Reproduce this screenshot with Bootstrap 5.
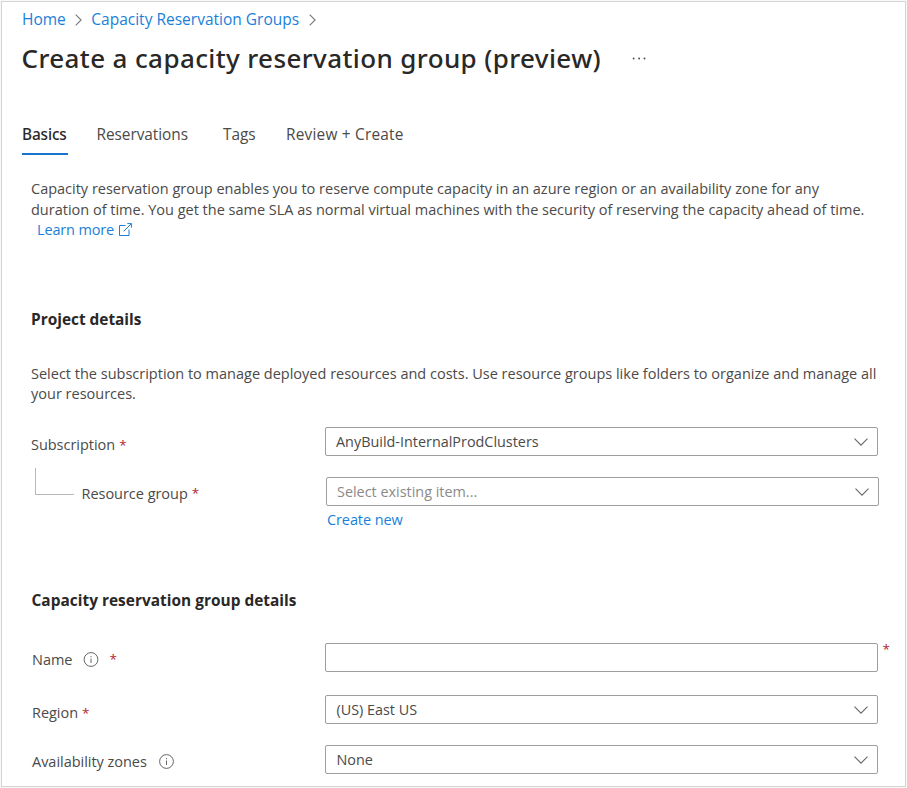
<!DOCTYPE html>
<html lang="en">
<head>
<meta charset="utf-8">
<meta name="viewport" content="width=device-width, initial-scale=1">
<title>Create a capacity reservation group (preview)</title>
<link rel="stylesheet" href="https://cdn.jsdelivr.net/npm/bootstrap@5.3.0/dist/css/bootstrap.min.css">
<style>
  body { background: #f8f8f8; padding: 1px; font-family: "Open Sans", "Noto Sans", sans-serif; font-size: 14.5px; line-height: 20.5px; color: #4b4a49; }
  a { color: #1a7fd9; text-decoration: none; }
  .blade { width: 905px; height: 786px; border-color: #d4d4d4 !important; padding: 7px 20px 0; }
  .crumbs { font-size: 15.5px; line-height: 20px; height: 20px; margin: 0; }
  .crumbs svg { margin: 1px 9px 0 9.5px; }
  .blade-title { font: 500 26px/36px "Noto Sans", "Open Sans", sans-serif; letter-spacing: .38px; color: #292827; margin: 11px 0 0 -.5px; }
  .more { margin: 11px 0 0 31px; }
  .tabs { margin-top: 49px; font-size: 15.4px; line-height: 20px; height: 30px; letter-spacing: -.05px; }
  .tabs .nav-link { color: #4b4a49; padding: 0; height: 30px; white-space: nowrap; }
  .tabs .nav-link.active { width: 46px; color: #292827; font: 500 15.4px/19px "Noto Sans", sans-serif; border-bottom: 2px solid #1a73cf; letter-spacing: -.15px; }
  .tab-res { margin-left: 28.5px; }
  .tab-tags { margin-left: 35px; }
  .tab-review { margin-left: 30.5px; letter-spacing: .22px; }
  .pane { padding-left: 9px; }
  .intro { margin: 24px -9px 0 0; white-space: nowrap; letter-spacing: -.005px; }
  .learn { margin-left: 6px; letter-spacing: -.15px; }
  .learn svg { margin: -3px 0 0 1px; }
  .section-head { font-size: 15.4px; font-weight: 700; line-height: 22px; height: 20px; color: #292827; margin: 0; }
  .head-project { margin-top: 68px; }
  .head-group { margin: 60px 0 0 .5px; letter-spacing: .03px; }
  .hint { margin: 35px -9px 0 0; white-space: nowrap; }
  .form-line { height: 29px; }
  .lbl { width: 294px; line-height: 29px; padding-top: 3px; white-space: nowrap; flex: none; letter-spacing: -.03px; }
  .lbl-high { padding-top: 2px; }
  .req { color: #b3262e; font-size: 13.5px; margin-left: 4px; }
  .field { width: 553px; height: 29px; flex: none; border: 1px solid #a09f9e; border-radius: 2px; background: #fff; padding: 0 9px 0 10px; line-height: 27px; color: #4b4a49; font-size: 14.4px; }
  .field svg { margin-top: 2px; }
  .field.empty-pick { color: #8b8a89; }
  .line-sub { margin-top: 22px; }
  .line-rg { margin: 21px 0 0 1px; }
  .line-rg .lbl { padding-top: 2px; }
  .branch { width: 39px; height: 27px; border: solid #b9b8b7; border-width: 0 0 1px 1px; margin: -11px 7.5px 0 3px; }
  .create-new { margin: 4px 0 0 296px; line-height: 20px; letter-spacing: -.1px; }
  .line-name { margin: 33px 0 0 1px; }
  .line-region { margin: 23px 0 0 1px; }
  .line-zones { margin: 21px 0 0 1px; }
  .lower .field { margin-left: -.6px; }
  .outer-req { margin-top: -4px; }
</style>
</head>
<body>
<main class="blade bg-white border">
  <nav class="crumbs d-flex align-items-center" aria-label="Breadcrumb">
    <a href="#">Home</a>
    <svg width="7" height="12" viewBox="0 0 7 12" fill="none" stroke="#777" stroke-width="1.1"><path d="M.7.6 6.1 6 .7 11.4"/></svg>
    <a href="#">Capacity Reservation Groups</a>
    <svg width="7" height="12" viewBox="0 0 7 12" fill="none" stroke="#777" stroke-width="1.1"><path d="M.7.6 6.1 6 .7 11.4"/></svg>
  </nav>
  <header class="d-flex align-items-center">
    <h1 class="blade-title">Create a capacity reservation group (preview)</h1>
    <svg class="more" width="14" height="3" viewBox="0 0 14 3" fill="#444"><circle cx="1.6" cy="1.5" r=".9"/><circle cx="7.1" cy="1.5" r=".9"/><circle cx="12.5" cy="1.5" r=".9"/></svg>
  </header>

  <nav class="tabs nav flex-nowrap">
    <a class="nav-link active" href="#">Basics</a>
    <a class="nav-link tab-res" href="#">Reservations</a>
    <a class="nav-link tab-tags" href="#">Tags</a>
    <a class="nav-link tab-review" href="#">Review + Create</a>
  </nav>

  <div class="pane">
    <p class="intro">Capacity reservation group enables you to reserve compute capacity in an azure region or an availability zone for any<br>duration of time. You get the same SLA as normal virtual machines with the security of reserving the capacity ahead of time.<br><a class="learn" href="#">Learn more
      <svg width="13" height="13" viewBox="0 0 13 13" fill="none" stroke="#1a7fd9" stroke-width="1"><path d="M6.5 2.5h-6v10h9.5v-6M8.3.6h4.1v4.1M12.3.7 4.8 8.2"/></svg></a></p>

    <h2 class="section-head head-project">Project details</h2>
    <p class="hint">Select the subscription to manage deployed resources and costs. Use resource groups like folders to organize and manage all<br>your resources.</p>

    <div class="form-line line-sub d-flex">
      <div class="lbl">Subscription<span class="req">*</span></div>
      <div class="field d-flex align-items-center justify-content-between"><span>AnyBuild-InternalProdClusters</span>
        <svg width="14" height="8" viewBox="0 0 14 8" fill="none" stroke="#666" stroke-width="1.1"><path d="M.5.6 7 7.1 13.5.6"/></svg></div>
    </div>
    <div class="form-line line-rg d-flex">
      <div class="lbl d-flex"><span class="branch"></span>Resource group<span class="req">*</span></div>
      <div class="field empty-pick d-flex align-items-center justify-content-between"><span>Select existing item...</span>
        <svg width="14" height="8" viewBox="0 0 14 8" fill="none" stroke="#666" stroke-width="1.1"><path d="M.5.6 7 7.1 13.5.6"/></svg></div>
    </div>
    <div class="create-new"><a href="#">Create new</a></div>

    <h2 class="section-head head-group">Capacity reservation group details</h2>

    <div class="lower">
      <div class="form-line line-name d-flex">
        <div class="lbl lbl-high d-flex"><label for="name">Name</label>
          <svg class="ms-2 mt-1" width="21" height="21" viewBox="0 0 21 21" fill="none" stroke="#666"><circle cx="11" cy="10.5" r="6.9"/><path d="M11 9.5V14M11 7v1.2"/></svg>
          <span class="req ms-2">*</span></div>
        <input id="name" class="field" type="text">
        <span class="req outer-req">*</span>
      </div>
      <div class="form-line line-region d-flex">
        <div class="lbl">Region<span class="req">*</span></div>
        <div class="field d-flex align-items-center justify-content-between"><span>(US) East US</span>
          <svg width="14" height="8" viewBox="0 0 14 8" fill="none" stroke="#666" stroke-width="1.1"><path d="M.5.6 7 7.1 13.5.6"/></svg></div>
      </div>
      <div class="form-line line-zones d-flex">
        <div class="lbl lbl-high d-flex">Availability zones
          <svg class="ms-2 mt-1" width="21" height="21" viewBox="0 0 21 21" fill="none" stroke="#666"><circle cx="11.5" cy="10.5" r="6.9"/><path d="M11.5 9.5V14M11.5 7v1.2"/></svg></div>
        <div class="field d-flex align-items-center justify-content-between"><span>None</span>
          <svg width="14" height="8" viewBox="0 0 14 8" fill="none" stroke="#666" stroke-width="1.1"><path d="M.5.6 7 7.1 13.5.6"/></svg></div>
      </div>
    </div>
  </div>
</main>
<script src="https://cdn.jsdelivr.net/npm/bootstrap@5.3.0/dist/js/bootstrap.bundle.min.js"></script>
</body>
</html>
